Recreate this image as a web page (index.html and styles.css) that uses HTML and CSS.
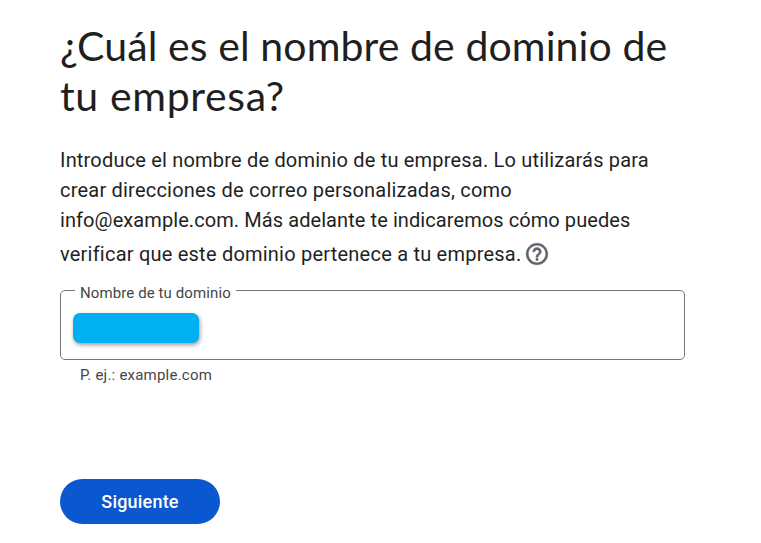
FILE: index.html
```html
<!DOCTYPE html>
<html lang="es">
<head>
    <meta charset="UTF-8">
    <meta name="viewport" content="width=device-width, initial-scale=1.0">
    <title>Nombre de dominio</title>
    <link rel="stylesheet" href="styles.css">
</head>
<body>

<main class="container">
    <h1><span class="title-first">¿Cuál es el nombre de dominio de</span><br><span class="title-last">tu empresa?</span></h1>

    <p class="intro">
        <span class="line line-1">Introduce el nombre de dominio de tu empresa. Lo utilizarás para</span>
        <span class="line line-2">crear direcciones de correo personalizadas, como</span>
        <span class="line line-3">info@example.com. Más adelante te indicaremos cómo puedes</span>
        <span class="line line-4"><span>verificar que este dominio pertenece a tu empresa.</span>
            <svg class="help" viewBox="0 0 24 24" aria-hidden="true">
                <path d="M11 18h2v-2h-2v2zm1-16C6.48 2 2 6.48 2 12s4.48 10 10 10 10-4.48 10-10S17.52 2 12 2zm0 18c-4.41 0-8-3.59-8-8s3.59-8 8-8 8 3.59 8 8-3.59 8-8 8zm0-14c-2.21 0-4 1.79-4 4h2c0-1.1.9-2 2-2s2 .9 2 2c0 2-3 1.75-3 5h2c0-2.25 3-2.5 3-5 0-2.21-1.79-4-4-4z"/>
            </svg>
        </span>
    </p>

    <fieldset class="field">
        <legend>Nombre de tu dominio</legend>
        <div class="field-value"></div>
    </fieldset>
    <p class="hint">P. ej.: example.com</p>

    <button class="next" type="button">Siguiente</button>
</main>

</body>
</html>
```

FILE: styles.css
```css
body {
    margin: 0;
    background-color: #fff;
    color: #1f1f1f;
    font-family: Roboto, sans-serif;
}
.container {
    width: 625px;
    padding: 21px 0 0 60px;
}
h1 {
    margin: 0;
    font-family: Lato, sans-serif;
    font-size: 41px;
    font-weight: 400;
    line-height: 50px;
    white-space: nowrap;
}
.title-first {
    letter-spacing: 0.1px;
}
.title-last {
    letter-spacing: 0.65px;
}
.intro {
    margin: 24px 0 0;
    font-size: 20px;
    line-height: 30px;
    white-space: nowrap;
}
.line {
    display: block;
    height: 30px;
}
.line-1 {
    letter-spacing: 0.19px;
}
.line-2 {
    letter-spacing: 0.21px;
}
.line-3 {
    letter-spacing: 0.08px;
}
.line-4 {
    display: flex;
    align-items: center;
    gap: 3px;
    height: 38px;
    letter-spacing: 0.22px;
    font-variant-ligatures: common-ligatures;
}
.help {
    width: 26px;
    height: 26px;
    fill: #5f6368;
    stroke: #5f6368;
    stroke-width: 0.4;
}

/* Campo del dominio */
.field {
    box-sizing: border-box;
    height: 78px;
    margin: 9px 0 0;
    padding: 15px 12px 0;
    border: 1px solid #747775;
    border-radius: 5px;
}
legend {
    height: 16px;
    margin-left: 2px;
    padding: 0 5px;
    color: #444746;
    font-size: 15px;
    letter-spacing: 0.1px;
    line-height: 22px;
}
.field-value {
    width: 126px;
    height: 30px;
    border-radius: 7px;
    background-color: #00b0f0;
    box-shadow: 1px 2px 4px rgba(0, 0, 0, 0.4);
}
.hint {
    margin: 5px 0 0 20px;
    color: #444746;
    font-size: 15px;
    letter-spacing: 0.22px;
    line-height: 20px;
}
.next {
    display: block;
    width: 160px;
    height: 45px;
    margin-top: 94px;
    padding: 0;
    border: 0;
    border-radius: 23px;
    background-color: #0b57d0;
    color: #fff;
    font-family: Roboto, sans-serif;
    font-size: 18px;
    font-weight: 500;
    letter-spacing: 0.2px;
}
```
